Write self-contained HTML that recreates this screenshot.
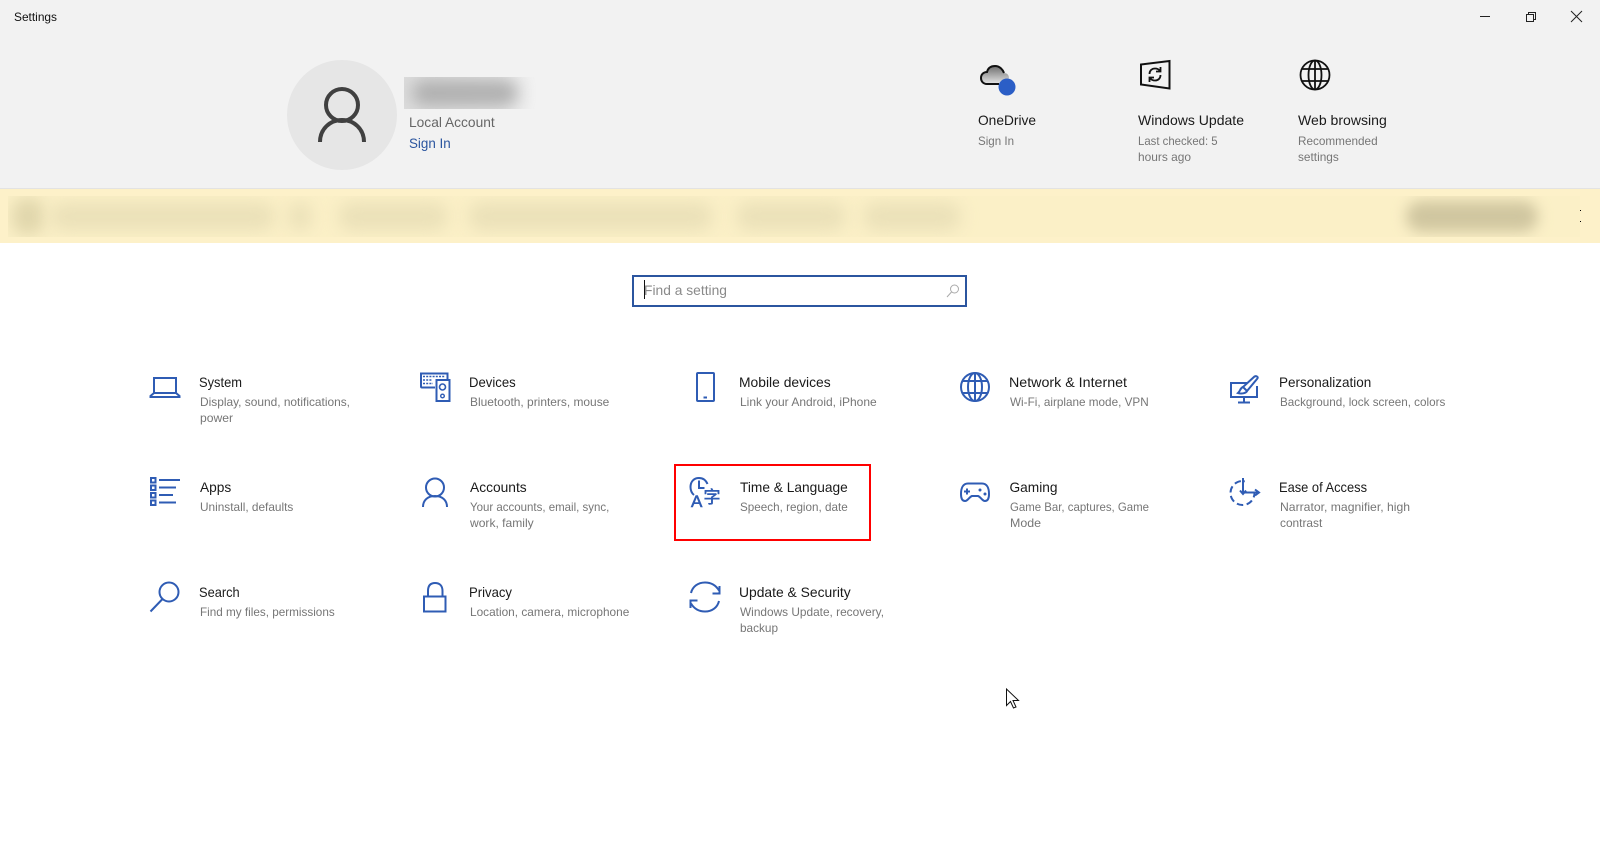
<!DOCTYPE html>
<html lang="en"><head><meta charset="utf-8"><title>Settings</title>
<style>
html,body{margin:0;padding:0;width:1600px;height:860px;overflow:hidden;background:#fff;font-family:"Liberation Sans",sans-serif}
.a{position:absolute}
#band{left:0;top:0;width:1600px;height:188px;background:#f2f2f2;border-bottom:1px solid #e3e3e3}
#yellow{left:0;top:189px;width:1600px;height:54px;background:#fdf1c9}
#yb{left:8px;top:196px;width:1572px;height:41px;background:#fbf0c7;overflow:hidden}
#yb i{position:absolute;display:block;filter:blur(8px);background:#ebe1b9;border-radius:14px}
#nm{left:404px;top:77px;width:132px;height:32px;overflow:hidden;background:linear-gradient(90deg,#dcdcdc,#e4e4e4 70%,#f2f2f2)}
#nm i{position:absolute;left:8px;top:3px;width:106px;height:26px;background:#b0b0b0;border-radius:13px;filter:blur(8px)}
#sb{left:632px;top:275px;width:331px;height:28px;border:2px solid #2b559f;background:#fff}
#red{left:674px;top:464px;width:193px;height:73px;border:2px solid #f00}
svg{position:absolute;left:0;top:0}
text{font-family:"Liberation Sans",sans-serif}
.t{font-size:14px;fill:#1a1a1a}
.s{font-size:12px;fill:#767676}
.b{fill:none;stroke:#2f5cb4;stroke-width:2}
.k{fill:none;stroke:#111;stroke-width:2}
</style></head><body>
<div class="a" id="band"></div>
<div class="a" id="yellow"></div>
<div class="a" id="yb">
<i style="left:4px;top:2px;width:32px;height:37px;background:#e0d6ac"></i>
<i style="left:42px;top:6px;width:225px;height:29px"></i>
<i style="left:280px;top:6px;width:24px;height:29px"></i>
<i style="left:330px;top:6px;width:110px;height:29px"></i>
<i style="left:460px;top:6px;width:245px;height:29px"></i>
<i style="left:728px;top:6px;width:110px;height:29px"></i>
<i style="left:855px;top:6px;width:98px;height:29px"></i>
<i style="left:1398px;top:5px;width:132px;height:31px;background:#d0c6a0;border-radius:15px;filter:blur(7px)"></i>
</div>
<div class="a" style="left:1580px;top:210px;width:1px;height:1px;background:#000"></div>
<div class="a" style="left:1580px;top:221px;width:1px;height:1px;background:#000"></div>
<div class="a" id="nm"><i></i></div>
<div class="a" id="sb"></div>
<div class="a" id="red"></div>
<svg width="1600" height="860" viewBox="0 0 1600 860">
<!-- title bar -->
<text x="14" y="21" class="s" style="fill:#111" textLength="43" lengthAdjust="spacingAndGlyphs">Settings</text>
<path d="M1480 16.500h10" stroke="#222" stroke-width="1" fill="none"/>
<path d="M1526.500 14.500h7v7h-7zM1528.500 14.500v-2h7v7h-2" stroke="#222" stroke-width="1" fill="none"/>
<path d="M1571 11l11 11M1582 11l-11 11" stroke="#222" stroke-width="1" fill="none"/>
<!-- avatar -->
<circle cx="342" cy="115" r="55" fill="#e6e6e6"/>
<circle cx="342" cy="105" r="16" fill="none" stroke="#404040" stroke-width="4"/>
<path d="M320 142C320 129 330 120 342 120S364 129 364 142" fill="none" stroke="#404040" stroke-width="4"/>
<text x="409" y="127" class="t" style="fill:#666" textLength="85.700" lengthAdjust="spacingAndGlyphs">Local Account</text>
<text x="409" y="148" class="t" style="fill:#2b559f" textLength="41.700" lengthAdjust="spacingAndGlyphs">Sign In</text>
<!-- onedrive -->
<defs><linearGradient id="g" x1="0" y1="0" x2="0" y2="1"><stop offset="0" stop-color="#6e6e6e"/><stop offset="1" stop-color="#e6e6e6"/></linearGradient></defs>
<path d="M999 84H987C983 84 981 81 981 78C981 74 984 72 987 72C988 68 991 66 995 66C1000 66 1003 70 1004 73C1007 73 1009 75 1009 78L1005 82Z" fill="url(#g)"/>
<path d="M999 84H987C983 84 981 81 981 78C981 74 984 72 987 72C988 68 991 66 995 66C1000 66 1003 70 1004 73" fill="none" stroke="#111" stroke-width="2"/>
<circle cx="1007" cy="87" r="8.500" fill="#2b5ec6"/>
<text x="978" y="125" class="t" textLength="58" lengthAdjust="spacingAndGlyphs">OneDrive</text>
<text x="978" y="145" class="s" textLength="36" lengthAdjust="spacingAndGlyphs">Sign In</text>
<!-- windows update -->
<path d="M1141 64.500L1169.500 61V88.500L1141 84.500Z" class="k"/>
<path d="M1149.500 74C1149.500 70.500 1152 68.500 1155 68.500C1157.500 68.500 1159 69.500 1160 71M1160.500 67V71.500H1156M1160.500 75C1160.500 78.500 1158 80.500 1155 80.500C1152.500 80.500 1151 79.500 1150 78M1149.500 82V77.500H1154" fill="none" stroke="#111" stroke-width="1.800"/>
<text x="1138" y="125" class="t" textLength="106" lengthAdjust="spacingAndGlyphs">Windows Update</text>
<text x="1138" y="145" class="s" textLength="79.600" lengthAdjust="spacingAndGlyphs">Last checked: 5</text>
<text x="1138" y="161" class="s" textLength="53" lengthAdjust="spacingAndGlyphs">hours ago</text>
<!-- web browsing -->
<g class="k" style="stroke-width:1.800"><circle cx="1315" cy="75" r="14.500"/><ellipse cx="1315" cy="75" rx="6.500" ry="14.500"/><path d="M1315 60.500V89.500M1302.500 69H1327.500M1302.500 81H1327.500"/></g>
<text x="1298" y="125" class="t" textLength="88.800" lengthAdjust="spacingAndGlyphs">Web browsing</text>
<text x="1298" y="145" class="s" textLength="79.600" lengthAdjust="spacingAndGlyphs">Recommended</text>
<text x="1298" y="161" class="s" textLength="40.800" lengthAdjust="spacingAndGlyphs">settings</text>
<!-- search box -->
<path d="M644.500 280V299" stroke="#111" stroke-width="1"/>
<text x="644" y="295" class="t" style="fill:#8a8a8a" textLength="83" lengthAdjust="spacingAndGlyphs">Find a setting</text>
<circle cx="954.500" cy="289" r="4" fill="none" stroke="#aaa" stroke-width="1"/><path d="M951.500 292L947 297" stroke="#aaa" stroke-width="1"/>

<!-- row 1 titles -->
<text x="199" y="387" class="t" textLength="43" lengthAdjust="spacingAndGlyphs">System</text>
<text x="469" y="387" class="t" textLength="46.700" lengthAdjust="spacingAndGlyphs">Devices</text>
<text x="739" y="387" class="t" textLength="91.700" lengthAdjust="spacingAndGlyphs">Mobile devices</text>
<text x="1009" y="387" class="t" textLength="118" lengthAdjust="spacingAndGlyphs">Network &amp; Internet</text>
<text x="1279" y="387" class="t" textLength="92.300" lengthAdjust="spacingAndGlyphs">Personalization</text>
<text x="200" y="406" class="s" textLength="150" lengthAdjust="spacingAndGlyphs">Display, sound, notifications,</text>
<text x="200" y="422" class="s" textLength="33" lengthAdjust="spacingAndGlyphs">power</text>
<text x="470" y="406" class="s" textLength="139.300" lengthAdjust="spacingAndGlyphs">Bluetooth, printers, mouse</text>
<text x="740" y="406" class="s" textLength="136.700" lengthAdjust="spacingAndGlyphs">Link your Android, iPhone</text>
<text x="1010" y="406" class="s" textLength="138.700" lengthAdjust="spacingAndGlyphs">Wi-Fi, airplane mode, VPN</text>
<text x="1280" y="406" class="s" textLength="165.300" lengthAdjust="spacingAndGlyphs">Background, lock screen, colors</text>
<!-- row 2 -->
<text x="200" y="492" class="t" textLength="31.300" lengthAdjust="spacingAndGlyphs">Apps</text>
<text x="470" y="492" class="t" textLength="56.700" lengthAdjust="spacingAndGlyphs">Accounts</text>
<text x="740" y="492" class="t" textLength="107.700" lengthAdjust="spacingAndGlyphs">Time &amp; Language</text>
<text x="1009.500" y="492" class="t" textLength="48" lengthAdjust="spacingAndGlyphs">Gaming</text>
<text x="1279" y="492" class="t" textLength="88" lengthAdjust="spacingAndGlyphs">Ease of Access</text>
<text x="200" y="511" class="s" textLength="93.300" lengthAdjust="spacingAndGlyphs">Uninstall, defaults</text>
<text x="470" y="511" class="s" textLength="139.300" lengthAdjust="spacingAndGlyphs">Your accounts, email, sync,</text>
<text x="470" y="527" class="s" textLength="63.700" lengthAdjust="spacingAndGlyphs">work, family</text>
<text x="740" y="511" class="s" textLength="107.700" lengthAdjust="spacingAndGlyphs">Speech, region, date</text>
<text x="1010" y="511" class="s" textLength="139" lengthAdjust="spacingAndGlyphs">Game Bar, captures, Game</text>
<text x="1010" y="527" class="s" textLength="31" lengthAdjust="spacingAndGlyphs">Mode</text>
<text x="1280" y="511" class="s" textLength="130" lengthAdjust="spacingAndGlyphs">Narrator, magnifier, high</text>
<text x="1280" y="527" class="s" textLength="42.300" lengthAdjust="spacingAndGlyphs">contrast</text>
<!-- row 3 -->
<text x="199" y="597" class="t" textLength="40.700" lengthAdjust="spacingAndGlyphs">Search</text>
<text x="469" y="597" class="t" textLength="43" lengthAdjust="spacingAndGlyphs">Privacy</text>
<text x="739" y="597" class="t" textLength="111.700" lengthAdjust="spacingAndGlyphs">Update &amp; Security</text>
<text x="200" y="616" class="s" textLength="134.700" lengthAdjust="spacingAndGlyphs">Find my files, permissions</text>
<text x="470" y="616" class="s" textLength="159.300" lengthAdjust="spacingAndGlyphs">Location, camera, microphone</text>
<text x="740" y="616" class="s" textLength="144" lengthAdjust="spacingAndGlyphs">Windows Update, recovery,</text>
<text x="740" y="632" class="s" textLength="38" lengthAdjust="spacingAndGlyphs">backup</text>

<!-- system laptop -->
<path d="M154 393V378H176V393" class="b"/>
<path d="M154 393H176L179.500 396V397H150.500V396Z" class="b"/>
<!-- devices -->
<path d="M435 387.500H422Q421 387.500 421 386.500V373.500H447.500V379" class="b"/>
<rect x="436.500" y="380" width="13" height="21" class="b"/>
<circle cx="442.500" cy="387" r="3" class="b" style="stroke-width:1.600"/>
<circle cx="442.500" cy="396" r="1.800" class="b" style="stroke-width:1.400"/>
<path d="M423 376.500H445M423 380H432M423 383.500H433" fill="none" stroke="#2f5cb4" stroke-width="1.600" stroke-dasharray="2 1.200"/>
<!-- mobile -->
<rect x="697" y="373" width="17" height="28" rx="1" class="b"/>
<path d="M703.500 397.500H707" stroke="#2f5cb4" stroke-width="2"/>
<!-- network -->
<g class="b"><circle cx="975" cy="387" r="14"/><ellipse cx="975" cy="387" rx="7" ry="14"/><path d="M975 373V401M962.500 381H987.500M962.500 393H987.500"/></g>
<!-- personalization -->
<path d="M1247 383H1231V397H1257V386" class="b"/>
<path d="M1244 397V402M1238 402.500H1250" class="b"/>
<path d="M1257 376.500C1258 377 1258 378 1257 379L1247 391L1243 387L1254.500 376.500C1255.500 376 1256 376 1257 376.500Z" class="b"/>
<path d="M1243 387C1240 388 1240.500 391 1238 393C1241 394 1246 393.500 1247 391" class="b"/>
<!-- apps -->
<g fill="none" stroke="#2f5cb4" stroke-width="2">
<path d="M159 480H180M159 487.500H176M159 495H173M159 502.500H176"/>
<rect x="151" y="478" width="4.500" height="4.500"/><rect x="151" y="485.500" width="4.500" height="4.500"/><rect x="151" y="493" width="4.500" height="4.500"/><rect x="151" y="500.500" width="4.500" height="4.500"/>
</g>
<!-- accounts -->
<circle cx="435" cy="487.500" r="9" class="b"/>
<path d="M423 507C423 500 428 496 435 496S447 500 447 507" class="b"/>
<!-- time & language -->
<path d="M694 495C691.500 493 690.500 490 690.500 487C690.500 481.500 694 478 699 478C703 478 706 480.500 707.500 484" class="b"/>
<path d="M699 480.500V488H704.500" class="b"/>
<text x="691" y="507" style="font-size:17px;fill:#2f5cb4;stroke:#2f5cb4;stroke-width:.6;font-family:'Liberation Sans',sans-serif">A</text>
<text x="703.500" y="503" style="font-size:17px;fill:#2f5cb4;stroke:#2f5cb4;stroke-width:.5;font-family:'Noto Sans CJK SC',sans-serif">字</text>
<!-- gaming -->
<path d="M968 483.500H982C987 483.500 989 488 989 494C989 498.500 987.500 501 985 501C982 501 981 497 978 496H972C969 497 968 501 965 501C962.500 501 961 498.500 961 494C961 488 963 483.500 968 483.500Z" class="b"/>
<path d="M964 491.500H970M967 488.500V494.500" stroke="#2f5cb4" stroke-width="2"/>
<circle cx="980" cy="490" r="1.500" fill="#2f5cb4"/><circle cx="985" cy="494" r="1.500" fill="#2f5cb4"/>
<!-- ease -->
<circle cx="1242.500" cy="493" r="12" fill="none" stroke="#2f5cb4" stroke-width="2" stroke-dasharray="6.500 3.500" stroke-dashoffset="2"/>
<rect x="1245" y="476" width="16" height="16" fill="#fff"/>
<path d="M1243 478V494M1240 490.500L1243 494L1246 490.500M1243 492.500H1258M1255 489.500L1259 492.500L1255 495.500" class="b"/>
<!-- search -->
<circle cx="169" cy="592" r="9.500" class="b"/>
<path d="M162.500 599L150.500 611.500" class="b"/>
<!-- privacy -->
<rect x="424" y="596.500" width="21.500" height="15" class="b"/>
<path d="M428 596V591C428 585.500 430.500 583 435 583S442.500 585.500 442.500 591V596" class="b"/>
<!-- update -->
<path d="M691 593C692.500 586.500 698 582.500 705 582.500C711 582.500 716 585.500 719 590.500" class="b"/>
<path d="M719.500 586V593.500H712.500" class="b"/>
<path d="M719 601C717.500 607.500 712 611.500 705 611.500C699 611.500 694 608.500 691 603.500" class="b"/>
<path d="M690.500 608V600.500H697.500" class="b"/>
<!-- cursor -->
<path d="M1006.500 689V705.500L1010.500 701.500L1013.500 708L1016 707L1013 700.500H1018.500Z" fill="#fff" stroke="#111" stroke-width="1"/>
</svg>
</body></html>
